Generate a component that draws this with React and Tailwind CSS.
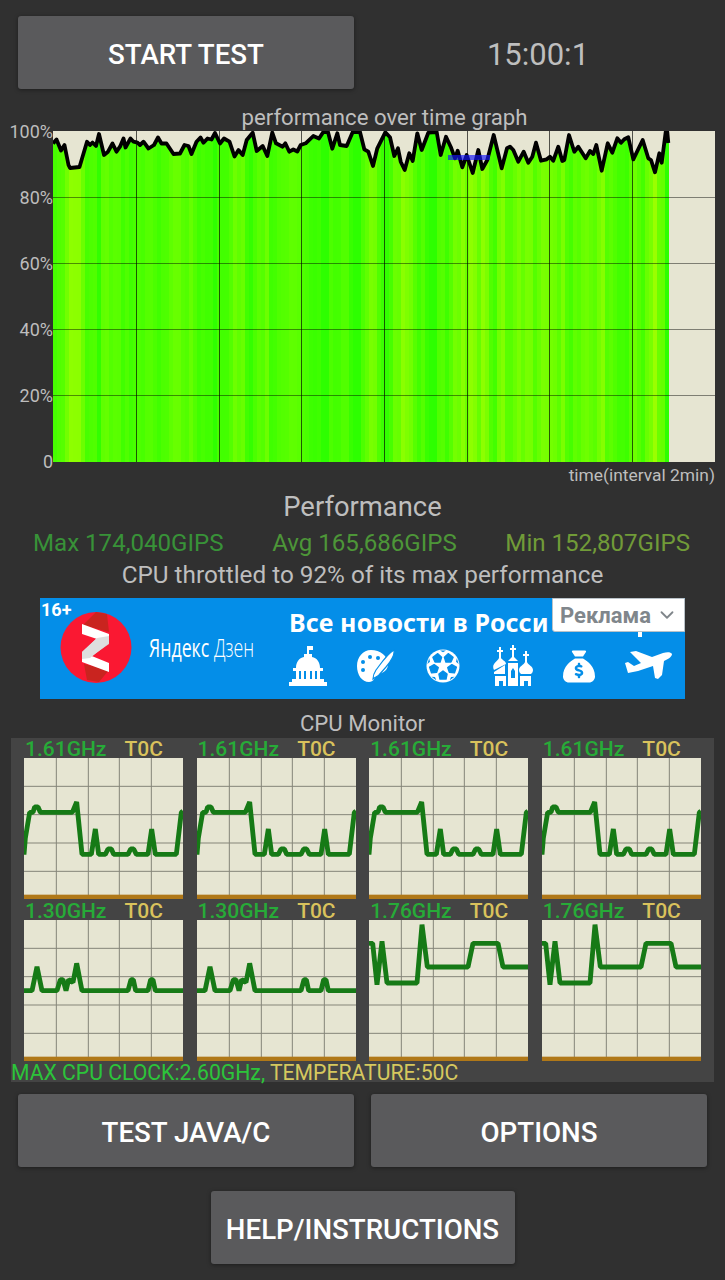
import React from 'react';
import { ChevronDown } from 'lucide-react';
import { FaSackDollar } from 'react-icons/fa6';

// throughput samples as [x, y] inside the 662x331 plot
const PERF = [
  [0, 12.5], [3.5, 8.5], [8, 19.5], [11.5, 14], [15.5, 34], [17, 37], [26.5, 36], [34, 10.7], [37, 14], [39.5, 11.5],
  [43, 15], [46, 3], [51, 24], [55, 20.7], [59.5, 12.5], [63.5, 20.7], [67, 15.7], [70.5, 7.5], [72.5, 16.5], [77.5, 7.5],
  [80.5, 10.7], [84.5, 11.7], [87, 14], [90.5, 10.7], [95.5, 17.5], [101, 14], [105, 6.5], [108.5, 12.5], [113.5, 12.5], [120.5, 23],
  [127, 22.5], [131.5, 14], [135.5, 15], [138.5, 23], [143.5, 10.7], [147.5, 6.5], [150.5, 11.7], [154.5, 7.5], [158.5, 8.5], [162, 2],
  [167, 12.5], [171, 7.5], [176.5, 10.7], [181.5, 25.5], [185.5, 19], [189.7, 24], [193.7, 9], [199.7, 1.7], [203.7, 20], [209.7, 15],
  [214.3, 25], [219.3, 1.5], [223, 12.3], [229.7, 15.7], [232.3, 12.3], [236.3, 20.7], [240.3, 18.5], [244.3, 20.5], [247.7, 14], [252.7, 12.3],
  [260.3, 5], [266, 7.5], [270.3, 1], [275, 1], [279.3, 17.7], [284.3, 2.3], [287, 14], [293.7, 15], [299.7, 1], [307, 1],
  [311.3, 18.3], [315.3, 20.7], [320, 35], [324.3, 17.3], [332.3, 1.3], [337, 6.3], [341.3, 25], [345, 17.3], [347.7, 30.7], [351.7, 39],
  [356.3, 22.3], [359.7, 30], [364.3, 2.3], [368.7, 19], [375.3, 1.7], [383.7, 1], [387.7, 24], [393, 5.7], [397.7, 15.7], [402, 27.3],
  [404.7, 19.7], [409.3, 36.3], [413.7, 24], [419.7, 42], [425.3, 19], [429.3, 38], [434.3, 29], [440.7, 4], [448.7, 37.3], [454, 17.3],
  [457, 15.7], [460.3, 19], [465.3, 30.7], [470.7, 20.7], [475.3, 31.7], [479.3, 25.7], [483, 11.7], [488, 29.7], [493.7, 28.3], [497, 25.7],
  [500.3, 29.7], [505.3, 15.7], [509.3, 30], [511.3, 29], [516, 4], [521.3, 20.7], [525.3, 15.7], [532.7, 27.3], [537, 20], [540.3, 23],
  [543.3, 14], [548.7, 39.7], [554.7, 12.3], [559.3, 21.7], [564.3, 7.3], [568, 11.7], [571.3, 8.3], [575.3, 6.3], [580.3, 28.3], [589.7, 9],
  [595.3, 27.3], [598, 29], [602, 41.3], [606.3, 22.3], [608.7, 31.7], [612.7, 1], [614.3, 1], [615.3, 12],
];

const CORE_161 = '0,290 4,240 17,163 27,163 32,147 42,147 49,163 145,163 158,132 174,289 202,289 214,213 224,289 244,289 252,273 262,273 269,289 312,289 320,273 329,273 337,289 372,289 383,213 394,289 457,289 472,163 477,160';
const CORE_130 = '0,212 24,212 39,140 54,212 99,212 109,179 117,179 126,212 134,179 147,187 158,130 174,212 312,212 321,179 328,179 335,212 372,212 380,179 387,179 394,212 477,212';
const CORE_176 = '0,70 11,70 24,194 39,64 54,189 144,189 159,14 175,141 297,141 312,70 387,70 402,141 477,141';

const CORES = [
  { clock: '1.61GHz', points: CORE_161 },
  { clock: '1.61GHz', points: CORE_161 },
  { clock: '1.61GHz', points: CORE_161 },
  { clock: '1.61GHz', points: CORE_161 },
  { clock: '1.30GHz', points: CORE_130 },
  { clock: '1.30GHz', points: CORE_130 },
  { clock: '1.76GHz', points: CORE_176 },
  { clock: '1.76GHz', points: CORE_176 },
];

const levelAt = (x) => {
  const i = PERF.findIndex((p) => p[0] >= x);
  if (i <= 0) return PERF[i === 0 ? 0 : PERF.length - 1][1];
  const [x0, y0] = PERF[i - 1];
  const [x1, y1] = PERF[i];
  return y0 + ((y1 - y0) * (x - x0)) / (x1 - x0);
};

const BAR = 4;
const BARS = Array.from({ length: 154 }, (_, i) => {
  const y = levelAt(i * BAR + BAR / 2);
  return { x: i * BAR, y, fill: `rgb(${Math.round(42 + y * 2.7)}, 255, 0)` };
});

const Button = ({ className, children }) => (
  <button
    className={`h-[73px] rounded-[3px] bg-[#5a5a5c] pt-[4px] text-[27.7px] font-medium text-white shadow-[0_1px_4px_rgba(0,0,0,0.4)] ${className}`}
  >
    {children}
  </button>
);

const PerfGraph = () => (
  <div className="flex h-[331px] pr-2.5">
    <div className="flex w-[53px] flex-col text-right text-[18px] leading-[22px] text-[#bdbdbd]">
      {['100%', '80%', '60%', '40%', '20%', '0'].map((label) => (
        <span key={label} className="-mt-[10px] mb-[10px] h-[66px] shrink-0">{label}</span>
      ))}
    </div>
    <svg width="662" height="331" viewBox="0 0 662 331" className="shrink-0 bg-[#e6e5d2]">
      {BARS.map((b) => (
        <rect key={b.x} x={b.x} y={b.y} width={BAR} height={331 - b.y} fill={b.fill} shapeRendering="crispEdges" />
      ))}
      {[66, 132, 198, 264].map((y) => (
        <path key={y} d={`M0 ${y + 0.5}H662`} stroke="#000" strokeOpacity="0.45" />
      ))}
      {[83, 166, 248, 331, 414, 496, 579].map((x) => (
        <path key={x} d={`M${x + 0.5} 0V331`} stroke="#000" strokeOpacity="0.65" />
      ))}
      <polyline points={PERF.map((p) => p.join(',')).join(' ')} fill="none" stroke="#000" strokeWidth="3.8" strokeLinejoin="round" />
      <path d="M395 26.5H437" stroke="#1414ff" strokeOpacity="0.65" strokeWidth="5" />
    </svg>
  </div>
);

const CapitolIcon = () => (
  <svg width="38" height="40" viewBox="0 0 38 40" fill="#fff">
    <path d="M18 0h6v4h-4v4h-2z" />
    <path d="M15 8h8v3c5 1 8 5 8 11H7c0-6 3-10 8-11zM4 22h30v3H4zM7 25h3v9H7zM12 25h3v9h-3zM17 25h4v9h-4zM23 25h3v9h-3zM28 25h3v9h-3zM3 33h32v3H3zM0 36h38v4H0z" />
  </svg>
);

const PaletteIcon = () => (
  <svg width="39" height="34" viewBox="0 0 39 34" fill="#fff">
    <path d="M15 1C7 1 1 8 1 17c0 9 5 16 12 16 5 0 5-4 7-6 3-3 12-3 12-12C32 7 24 1 15 1z" />
    <g fill="#048ee8">
      <circle cx="7" cy="13" r="2" />
      <circle cx="14" cy="8" r="2" />
      <circle cx="22" cy="9" r="2" />
      <circle cx="7" cy="21" r="2" />
    </g>
    <path d="M38 1c1 5-3 11-8 17l-7 8c-2 2-4 2-6 4 0-4 1-6 3-9 4-5 10-15 18-20z" stroke="#048ee8" strokeWidth="1.2" />
  </svg>
);

const BallIcon = () => (
  <svg width="34" height="34" viewBox="0 0 34 34">
    <circle cx="17" cy="17" r="16.5" fill="#fff" />
    <g fill="#048ee8">
      {[0, 72, 144, 216, 288].map((a) => (
        <path key={a} transform={`rotate(${a} 17 17)`} d="M13 25l4-3 4 3-1 5h-6z" stroke="#048ee8" strokeWidth="1.5" strokeLinejoin="round" />
      ))}
      {[0, 72, 144, 216, 288].map((a) => (
        <path key={a} transform={`rotate(${a} 17 17)`} d="M14 1.5h6l-3 1.8z" />
      ))}
    </g>
  </svg>
);

const ChurchIcon = () => (
  <svg width="41" height="42" viewBox="0 0 41 42" fill="#fff">
    <path d="M7 2h2v3h2v2H9v6c1 2 5 3 5 6L2 25c-3-6 3-8 5-12V7H5V5h2z" />
    <path d="M20 0h2v3h2v2h-2v7l4 4H16l4-4V5h-2V3h2z" />
    <path d="M33 6h2v3h2v2h-2v6c1 3 6 4 6 8 0 2-1 3-2 4H29c-1-1-2-2-2-4 0-4 5-5 6-8v-6h-2V9h2z" />
    <path d="M2 27l11-7v9H2zM3 31h11v10h-3v-5H7v5H3zM16 18h10v23H16zM28 31h11v10h-3v-5h-4v5h-4z" />
    <path d="M19 33v-7l2-3 2 3v7z" fill="#048ee8" />
  </svg>
);

const PlaneIcon = () => (
  <svg width="47" height="29" viewBox="0 0 47 29" fill="#fff">
    <path d="M5 2l6-1 16 6 11-4c4-1 8-1 9 1 0 3-4 5-8 7l-2 14-4 4-3-1-2-12-15 5-10 2c-1-3-2-7-3-10l3-1 6 4 7-3z" />
  </svg>
);

const AdBanner = () => (
  <div className="relative mx-10 mt-[7px] flex h-[101px] overflow-hidden bg-[#048ee8] text-white">
    <span className="absolute left-px top-[2px] text-[18px] leading-5 font-bold">16+</span>
    <svg width="72" height="73" viewBox="0 0 72 73" className="mt-[13px] ml-[20px] shrink-0">
      <circle cx="36" cy="36.5" r="35.5" fill="#fa1832" />
      <path d="M23 14L36 1l11 2 2 18zM24 53l25 6-10 12-12-2z" fill="#c9241f" />
      <path d="M37 27l12-1v7L29 47l-7-2v-4z" fill="#d2d2d2" />
      <path d="M22 13l27 10v9l-27-9zM22 41l27 11v9l-27-10z" fill="#fff" />
      <path d="M49 25v7L30 47l-8 1v-7l15-14z" fill="#dedede" />
    </svg>
    <div className="mt-[33px] ml-[17px] w-[122px] shrink-0">
      <span className="inline-block origin-left scale-x-[0.71] font-['Open_Sans',sans-serif] text-[25px] leading-[32px] font-medium whitespace-nowrap">
        Яндекс <span className="font-light">Дзен</span>
      </span>
    </div>
    <div className="ml-[18px] flex shrink-0 flex-col">
      <span className="mt-[5px] w-[263px] overflow-hidden font-['Noto_Sans',sans-serif] text-[25px] leading-[38px] font-bold tracking-[0.15px] whitespace-nowrap">
        Все новости в Росси
      </span>
      <div className="mt-[4px] flex h-[42px] w-[384px] items-center">
        <CapitolIcon />
        <div className="ml-[29px]"><PaletteIcon /></div>
        <div className="ml-[31px]"><BallIcon /></div>
        <div className="ml-[32px]"><ChurchIcon /></div>
        <FaSackDollar className="ml-[30px] h-[37px] w-[32px]" />
        <div className="mb-[4px] ml-[30px]"><PlaneIcon /></div>
      </div>
    </div>
    {/* tail of the headline peeking out below the label */}
    <div className="absolute top-[33px] right-[43px] h-[6px] w-[4px] bg-white" />
    <div className="absolute top-0 right-0 flex h-[34px] w-[133px] items-center rounded-bl-[3px] border border-[#b9c2c8] bg-white pl-[7px] text-[22px] font-bold text-[#80868b]">
      Реклама
      <ChevronDown className="ml-[5px] h-[22px] w-[22px]" strokeWidth={2} />
    </div>
  </div>
);

const CoreGraph = ({ clock, points }) => (
  <div className="w-[159px]">
    <div className="flex h-[20px] justify-between pr-[20px] pl-px text-[21px] leading-[22px] font-medium">
      <span className="text-[#27ab38]">{clock}</span>
      <span className="text-[#d9c25c]">T0C</span>
    </div>
    <svg width="159" height="141" viewBox="0 0 477 423" className="block bg-[#e6e5d2]">
      <path d="M97 0V423M193 0V423M286 0V423M382 0V423M0 85H477M0 170H477M0 255H477M0 340H477" stroke="#858579" strokeWidth="3" />
      <polyline points={points} fill="none" stroke="#167a16" strokeWidth="14.5" strokeLinejoin="bevel" />
      <rect y="410" width="477" height="13" fill="#b07818" />
    </svg>
  </div>
);

export default function App() {
  return (
    <div className="h-[1280px] w-[725px] overflow-hidden bg-[#303030] font-[Roboto,sans-serif] text-[#bebebe]">
      <div className="flex items-center px-[18px] pt-[16px]">
        <Button className="w-[336px]">START TEST</Button>
        <span className="ml-[17px] w-[334px] pt-[5px] text-center text-[31px]">15:00:1</span>
      </div>

      <h2 className="mt-[15px] ml-[44px] h-[27px] text-center text-[22.2px] leading-[27px]">performance over time graph</h2>
      <PerfGraph />
      <p className="mr-[10px] h-[26px] text-right text-[17.4px] leading-[26px]">time(interval 2min)</p>

      <h3 className="h-[38px] text-center text-[27.4px] leading-[38px]">Performance</h3>
      <div className="flex h-[32px] justify-between pr-[35px] pl-[33px] text-[24.1px] leading-[34px]">
        <span className="text-[#389238]">Max 174,040GIPS</span>
        <span className="text-[#4d9638]">Avg 165,686GIPS</span>
        <span className="text-[#719b38]">Min 152,807GIPS</span>
      </div>
      <p className="h-[33px] text-center text-[24.3px] leading-[34px]">CPU throttled to 92% of its max performance</p>

      <AdBanner />

      <h3 className="mt-[10px] h-[29px] text-center text-[22.2px] leading-[29px]">CPU Monitor</h3>
      <div className="mx-[11px] h-[344px] bg-[#444]">
        <div className="grid w-[703px] grid-cols-[repeat(4,159px)] gap-x-[13.6px] gap-y-px pl-[13px]">
          {CORES.map((core, i) => (
            <CoreGraph key={i} {...core} />
          ))}
        </div>
        <p className="h-[20px] text-[21.2px] leading-[24px] whitespace-pre text-[#2cc43a]">
          MAX CPU CLOCK:2.60GHz, <span className="text-[#d6c85e]">TEMPERATURE:50C</span>
        </p>
      </div>

      <div className="mt-[12px] flex gap-[17px] px-[18px]">
        <Button className="w-[336px]">TEST JAVA/C</Button>
        <Button className="w-[336px]">OPTIONS</Button>
      </div>
      <div className="mt-[24px] flex justify-center">
        <Button className="w-[304px]">HELP/INSTRUCTIONS</Button>
      </div>
    </div>
  );
}
